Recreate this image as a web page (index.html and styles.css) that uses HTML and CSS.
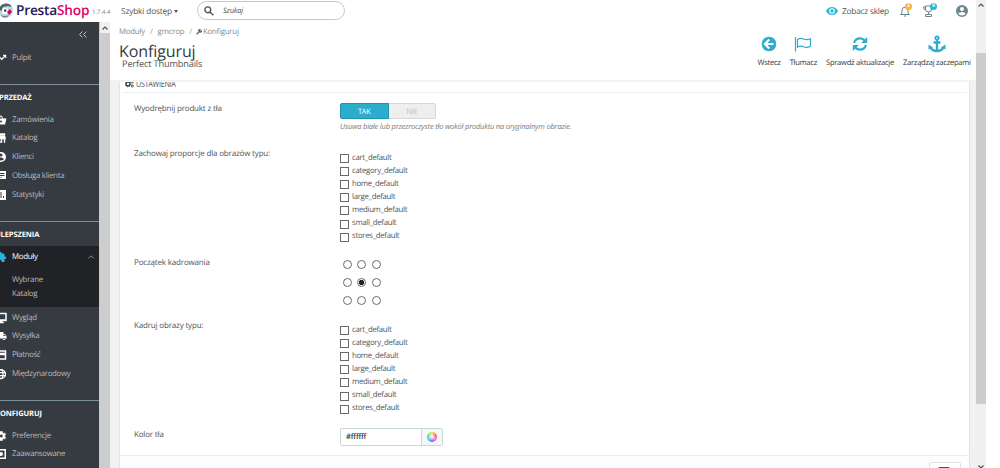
FILE: index.html
```html
<!doctype html>
<html lang="pl">
<head>
    <meta charset="UTF-8">
    <title>Konfiguruj - PrestaShop</title>
    <link rel="stylesheet" href="styles.css">
</head>
<body>
    <div class="app">
        <header class="topbar">
            <svg class="logo" width="13" height="17" viewBox="0 0 13 17">
                <circle cx="6" cy="8.500" r="7" fill="#b5dbe2"/>
                <path d="M-1 8a7 7 0 0 1 13-3l-4-1-5 1-1 4z" fill="#53636b"/>
                <circle cx="5" cy="9" r="3.200" fill="#fff"/>
                <circle cx="5.200" cy="8.600" r="1.300" fill="#3b4a52"/>
                <path d="M7 10l3-3 2 3-3 3z" fill="#df0067"/>
                <path d="M0 13q5 2 9 0l-2 2.500H3z" fill="#6e8790"/>
            </svg>
            <div class="brand">Presta<span>Shop</span></div>
            <div class="version">1.7.4.4</div>
            <div class="quick">Szybki dostęp <i class="caret"></i></div>
            <div class="search">
                <svg width="10" height="10" viewBox="0 0 10 10" fill="none" stroke="#4c5357" stroke-width="1.400"><circle cx="3.800" cy="3.800" r="2.900"/><path d="M6 6l3.300 3.300"/></svg>
                <span>Szukaj</span>
            </div>
            <div class="shop-link">
                <svg width="12" height="8" viewBox="0 0 12 8"><path d="M0 4q2-4 6-4t6 4q-2 4-6 4T0 4z" fill="#25b9d7"/><circle cx="6" cy="4" r="2.800" fill="#fff"/><circle cx="6" cy="4" r="1.700" fill="#25b9d7"/></svg>
                <span>Zobacz sklep</span>
            </div>
            <div class="notif bell">
                <svg width="10" height="12" viewBox="0 0 10 12" fill="none" stroke="#6c868e"><path d="M.5 9.500h9L8 8V5Q8 2.200 5 2.200T2 5v3z"/><path d="M4 11h2"/></svg>
                <b class="badge orange">2</b>
            </div>
            <div class="notif trophy">
                <svg width="11" height="12" viewBox="0 0 11 12" fill="none" stroke="#6c868e"><path d="M2.500 1h6v3q0 3-3 3t-3-3zM2.500 2H.5q0 3 2.500 3M8.500 2h2q0 3-2.500 3M5.500 7v2M2.500 11.500V9.500h6v2z"/></svg>
                <b class="badge blue">9</b>
            </div>
            <svg class="user" width="12" height="12" viewBox="0 0 24 24" fill="#6c868e"><path d="M12 0a12 12 0 1 0 0 24 12 12 0 0 0 0-24zm0 4a4 4 0 1 1 0 8 4 4 0 0 1 0-8zm0 17q-5 0-7.500-4 2-3 7.500-3t7.500 3Q17 21 12 21z"/></svg>
        </header>

        <div class="layout">
            <nav class="sidebar">
                <div class="collapse">
                    <svg width="8" height="7" viewBox="0 0 8 7" fill="none" stroke="#bcc3c8"><path d="M3.500.5l-3 3 3 3M7.500.5l-3 3 3 3"/></svg>
                </div>
                <a class="item dashboard"><svg class="ico" viewBox="0 0 24 24"><path d="M16 6l2.300 2.300-4.900 4.900-4-4L2 16.600 3.400 18l6-6 4 4 6.300-6.300L22 12V6z" stroke="#fff"/></svg>Pulpit</a>

                <section class="group">
                    <h2>SPRZEDAŻ</h2>
                    <a class="item"><svg class="ico" viewBox="0 0 24 24"><path d="M17 9l-5-7-5 7H1l3 12h16l3-12zM9 9l3-4 3 4zm3 8a2 2 0 1 1 0-4 2 2 0 0 1 0 4z"/></svg>Zamówienia</a>
                    <a class="item"><svg class="ico" viewBox="0 0 24 24"><path d="M20 3H4v3h16zm1 11v-2l-1-5H4l-1 5v2h1v7h10v-7h4v7h2v-7zm-9 5H6v-5h6z" stroke="#fff"/></svg>Katalog</a>
                    <a class="item"><svg class="ico" viewBox="0 0 24 24"><path d="M12 2a10 10 0 1 0 0 20 10 10 0 0 0 0-20zm0 3a3 3 0 1 1 0 6 3 3 0 0 1 0-6zm0 14q-4 0-6-3 2-3 6-3t6 3q-2 3-6 3z"/></svg>Klienci</a>
                    <a class="item"><svg class="ico" viewBox="0 0 24 24"><path d="M2 2h20v16H6l-4 4zM5 6v2h14V6zm0 4v2h14v-2zm0 4v1h9v-1z" fill-rule="evenodd"/></svg>Obsługa klienta</a>
                    <a class="item"><svg class="ico" viewBox="0 0 24 24"><path d="M2 2h20v20H2zm5 8v8h2v-8zm4-4v12h2V6zm5 8v4h2v-4z" fill-rule="evenodd"/></svg>Statystyki</a>
                </section>

                <section class="group improve">
                    <h2>ULEPSZENIA</h2>
                    <div class="opened">
                        <a class="item current"><svg class="ico" viewBox="0 0 24 24"><path d="M20 11h-1V7q0-2-2-2h-4V4a2.500 2.500 0 0 0-5 0v1H4Q2 5 2 7v4h2a2.500 2.500 0 0 1 0 5H2v6h6v-2a2.500 2.500 0 0 1 5 0v2h6v-6h1a2.500 2.500 0 0 0 0-5z"/></svg>Moduły
                            <svg class="chevron" width="6" height="4" viewBox="0 0 6 4" fill="none" stroke="#7e9299"><path d="M.3 3.500L3 .8l2.700 2.700"/></svg></a>
                        <a class="sub">Wybrane</a>
                        <a class="sub">Katalog</a>
                    </div>
                    <a class="item"><svg class="ico" viewBox="0 0 24 24"><path d="M1 2h22v16h-9v2h3v2H7v-2h3v-2H1zm2 2v11h18V4z" fill-rule="evenodd" stroke="#fff"/></svg>Wygląd</a>
                    <a class="item"><svg class="ico" viewBox="0 0 24 24"><path d="M20 8h-3V4H1v13h2a3 3 0 0 0 6 0h6a3 3 0 0 0 6 0h2v-5zM6 18.500a1.500 1.500 0 1 1 0-3 1.500 1.500 0 0 1 0 3zM17 9.500h2.500l2 2.500H17zm1 9a1.500 1.500 0 1 1 0-3 1.500 1.500 0 0 1 0 3z"/></svg>Wysyłka</a>
                    <a class="item"><svg class="ico" viewBox="0 0 24 24"><path d="M2 3h20v18H2zm2 2v3h16V5zm0 7v7h16v-7z" fill-rule="evenodd" stroke="#fff"/></svg>Płatność</a>
                    <a class="item"><svg class="ico line" viewBox="0 0 24 24"><circle cx="12" cy="12" r="9"/><ellipse cx="12" cy="12" rx="4" ry="9"/><path d="M3 9h18M3 15h18"/></svg>Międzynarodowy</a>
                </section>

                <section class="group configure">
                    <h2>KONFIGURUJ</h2>
                    <a class="item"><svg class="ico" viewBox="0 0 24 24"><path d="M19.400 13v-2l2.100-1.700-2-3.500-2.500 1-1.700-1L15 3h-5l-.4 2.800-1.700 1-2.500-1-2 3.500L5.500 11v2l-2.100 1.700 2 3.500 2.500-1 1.700 1L10 21h5l.4-2.800 1.700-1 2.500 1 2-3.500zM12.500 15.500a3.500 3.500 0 1 1 0-7 3.500 3.500 0 0 1 0 7z" stroke="#fff"/></svg>Preferencje</a>
                    <a class="item"><svg class="ico" viewBox="0 0 24 24"><path d="M2 2h20v20H2zm3 3v14h14V5z" fill-rule="evenodd"/><circle cx="12" cy="12" r="4"/></svg>Zaawansowane</a>
                </section>
            </nav>

            <div class="scrollbar side-scroll"><svg width="6" height="4" viewBox="0 0 6 4"><path d="M.5 3.500L3 1l2.500 2.500"/></svg><div class="thumb"></div></div>

            <main class="content">
                <div class="page-head">
                    <div class="titles">
                        <div class="breadcrumb">Moduły<i>/</i>gmcrop<i>/</i><svg width="6" height="6" viewBox="0 0 6 6"><path d="M.7 5.300L3.600 2.400" stroke="#5b6367" stroke-width="1.300"/><path d="M3 3a1.700 1.700 0 0 1 2-2.800L4 1.300l.7.700L5.800 1A1.700 1.700 0 0 1 3 3z" fill="#5b6367"/></svg>Konfiguruj</div>
                        <h1>Konfiguruj</h1>
                        <h4>Perfect Thumbnails</h4>
                    </div>
                    <div class="actions">
                        <a><svg width="16" height="16" viewBox="0 0 16 16"><circle cx="8" cy="8" r="7.300" fill="#2eacce"/><path d="M8.300 3.500L3.800 8l4.500 4.500M4 8h8.500" fill="none" stroke="#fff" stroke-width="2"/></svg>Wstecz</a>
                        <a><svg width="18" height="16" viewBox="0 0 18 16" fill="none" stroke="#2eacce" stroke-width="1.200"><path d="M1.500 1v14.500M3.500 3.500q3-2 6-.5t7-.3v7.500q-4 2-7 .5t-6 .5z"/></svg>Tłumacz</a>
                        <a><svg width="16" height="16" viewBox="0 0 16 16" fill="none" stroke="#2eacce" stroke-width="2.200"><path d="M2 6.800Q3.500 2.300 8 2.300q3 0 5 2.500M14 9.200Q12.500 13.700 8 13.700q-3 0-5-2.500"/><path d="M15.200 1v6H9.200zM.8 15V9h6z" fill="#2eacce" stroke="none"/></svg>Sprawdź aktualizacje</a>
                        <a><svg width="18" height="18" viewBox="0 0 18 18" fill="none" stroke="#2eacce" stroke-width="2.300"><circle cx="9" cy="3" r="1.700" stroke-width="1.800"/><path d="M9 5v11M5.500 7.500h7M2.500 12q1.500 4 6.500 4t6.500-4"/><path d="M.5 14.500v-5l4.500 3zM17.500 14.500v-5l-4.500 3z" fill="#2eacce" stroke="none"/></svg>Zarządzaj zaczepami</a>
                    </div>
                </div>

                <div class="panel">
                    <div class="panel-heading">
                        <svg width="9" height="8" viewBox="0 0 9 8" fill="none" stroke="#444b4f"><circle cx="3" cy="4" r="1.900" stroke-width="1.500"/><circle cx="3" cy="4" r="2.800" stroke-dasharray="1.100 1.100"/><circle cx="7.300" cy="2" r="1"/><circle cx="7.300" cy="6" r="1"/></svg>
                        <span>USTAWIENIA</span>
                    </div>
                    <div class="row row-switch">
                        <label>Wyodrębnij produkt z tła</label>
                        <div>
                            <div class="switch"><span class="on">TAK</span><span>NIE</span></div>
                            <p class="help">Usuwa białe lub przezroczyste tło wokół produktu na oryginalnym obrazie.</p>
                        </div>
                    </div>
                    <div class="row row-types">
                        <label>Zachowaj proporcje dla obrazów typu:</label>
                        <div class="checks">
                            <span><i></i>cart_default</span>
                            <span><i></i>category_default</span>
                            <span><i></i>home_default</span>
                            <span><i></i>large_default</span>
                            <span><i></i>medium_default</span>
                            <span><i></i>small_default</span>
                            <span><i></i>stores_default</span>
                        </div>
                    </div>
                    <div class="row row-origin">
                        <label>Początek kadrowania</label>
                        <div class="radios">
                            <i></i><i></i><i></i>
                            <i></i><i class="checked"></i><i></i>
                            <i></i><i></i><i></i>
                        </div>
                    </div>
                    <div class="row row-crop">
                        <label>Kadruj obrazy typu:</label>
                        <div class="checks">
                            <span><i></i>cart_default</span>
                            <span><i></i>category_default</span>
                            <span><i></i>home_default</span>
                            <span><i></i>large_default</span>
                            <span><i></i>medium_default</span>
                            <span><i></i>small_default</span>
                            <span><i></i>stores_default</span>
                        </div>
                    </div>
                    <div class="row row-color">
                        <label>Kolor tła</label>
                        <div class="color"><span>#ffffff</span><b><i></i></b></div>
                    </div>
                    <div class="panel-footer">
                        <div class="save"><i></i></div>
                    </div>
                </div>
            </main>
        </div>
    </div>
    <div class="scrollbar page-scroll"><svg width="6" height="4" viewBox="0 0 6 4"><path d="M.5 3.500L3 1l2.500 2.500"/></svg><div class="thumb"></div><svg class="down" width="6" height="4" viewBox="0 0 6 4"><path d="M.5.5L3 3 5.500.5"/></svg></div>
</body>
</html>
```
FILE: styles.css
```css
* {
    box-sizing: border-box;
}

body {
    margin: 0;
    height: 468px;
    display: flex;
    overflow: hidden;
    background: #fff;
    font-family: "Open Sans", sans-serif;
    font-size: 8px;
    letter-spacing: -.22px;
    text-rendering: geometricPrecision;
    color: #4f575b;
}

h1, h2, h4, p {
    margin: 0;
}

i {
    font-style: normal;
}

svg {
    flex: none;
    display: block;
}

.app {
    width: 976px;
    height: 468px;
    overflow: hidden;
}

/* top bar */
.topbar {
    height: 22px;
    display: flex;
    align-items: center;
    padding-bottom: 1px;
    white-space: nowrap;
    font-size: 8.3px;
}

.brand {
    width: 73px;
    margin-left: 3px;
    font-size: 13.7px;
    font-weight: 600;
    letter-spacing: -.2px;
    line-height: 20px;
    color: #251b5b;
}

.brand span {
    color: #df0067;
}

.version {
    width: 32px;
    margin-left: 3px;
    padding-top: 3px;
    font-size: 6px;
    letter-spacing: 0;
    color: #6c868e;
}

.quick {
    margin-left: -3px;
    width: 76px;
    padding-top: 1px;
    letter-spacing: -.15px;
}

.caret {
    display: inline-block;
    vertical-align: 1px;
    border: 2.5px solid transparent;
    border-top: 3px solid #4c5357;
    border-bottom: 0;
}

.search {
    width: 148px;
    height: 19px;
    display: flex;
    align-items: center;
    gap: 9px;
    padding-left: 6px;
    border: 1px solid #bbcdd2;
    border-radius: 10px;
    font-size: 7.5px;
    font-style: italic;
}

.search span,
.shop-link span {
    padding-top: 1px;
}

.shop-link {
    display: flex;
    align-items: center;
    gap: 4px;
    margin-left: 481px;
    width: 75px;
}

.notif {
    position: relative;
    width: 23px;
    left: -1px;
}

.badge {
    position: absolute;
    top: -2px;
    left: 5px;
    width: 7px;
    height: 7px;
    border-radius: 50%;
    font-size: 5px;
    letter-spacing: 0;
    line-height: 7px;
    text-align: center;
    color: #fff;
}

.trophy .badge {
    left: 7px;
}

.orange {
    background: #fab13c;
}

.blue {
    background: #25b9d7;
}

.user {
    margin-left: 9px;
}

/* sidebar */
.layout {
    display: flex;
    height: 446px;
}

.sidebar {
    width: 100px;
    flex: none;
    overflow: hidden;
    background: #363a41;
    border-right: 1px solid #cfc9c3;
    font-size: 7.9px;
    letter-spacing: -.31px;
    color: #b4b9bd;
}

.collapse {
    display: flex;
    justify-content: flex-end;
    padding: 9px 12px 0 0;
    height: 26px;
}

.item {
    display: flex;
    align-items: center;
    height: 18.8px;
    padding-top: 1.5px;
    white-space: nowrap;
}

.ico {
    width: 12px;
    height: 12px;
    margin-left: -5px;
    margin-right: 5px;
    fill: #fff;
}

.ico.line {
    fill: none;
    stroke: #fff;
    stroke-width: 2.5;
}

.group {
    height: 137px;
    border-top: 1px solid #7a8f99;
}

.dashboard {
    margin-bottom: 17.2px;
}

.group h2 {
    margin-left: -5px;
    padding-top: 8.5px;
    height: 24.5px;
    font-size: 7.5px;
    line-height: 11px;
    letter-spacing: -.1px;
    color: #fff;
}

.group.improve {
    height: 179px;
}

.opened {
    height: 61px;
    background: #202226;
}

.current {
    color: #fff;
    height: 20px;
    margin-bottom: 6.5px;
}

.current .ico {
    fill: #25b9d7;
}

.chevron {
    margin-left: auto;
    margin-right: 5px;
}

.sub {
    display: block;
    padding-left: 12px;
    line-height: 14px;
}

/* scrollbars */
.scrollbar {
    width: 10px;
    flex: none;
    display: flex;
    flex-direction: column;
    align-items: center;
    background: #f0f0f0;
}

.scrollbar svg {
    margin: 4px 0 3px;
    fill: none;
    stroke: #505050;
    stroke-width: 1.2;
}

.thumb {
    width: 10px;
    background: #cdcdcd;
}

.side-scroll .thumb {
    flex: 1;
}

.page-scroll svg:first-child {
    margin-top: 3px;
    margin-bottom: 46px;
}

.page-scroll .thumb {
    height: 351px;
}

.page-scroll .down {
    margin: auto 0 -1px;
}

/* page header */
.content {
    flex: 1;
    background: #eff1f2;
}

.page-head {
    position: relative;
    z-index: 1;
    height: 59px;
    display: flex;
    justify-content: space-between;
    padding: 0 5.3px 0 9px;
    background: #fff;
    border-bottom: 1px solid #eef0f1;
    box-shadow: 0 1px 0 #f5f6f7;
}

.breadcrumb {
    display: flex;
    align-items: center;
    height: 18px;
    padding-top: 1px;
    font-size: 7.8px;
    letter-spacing: -.2px;
    color: #858c90;
}

.breadcrumb i {
    margin: 0 5px;
    color: #72c279;
}

.breadcrumb svg {
    margin: 1px 1px 0 -1px;
}

h1 {
    font-size: 16px;
    font-weight: 400;
    line-height: 23px;
    letter-spacing: -.1px;
    color: #363a41;
}

h4 {
    margin: -5px 0 0 3px;
    font-size: 9.2px;
    font-weight: 400;
    line-height: 11px;
    letter-spacing: -.15px;
    color: #4c5357;
}

.actions {
    display: flex;
    gap: 9px;
    padding-top: 13px;
    white-space: nowrap;
    font-size: 7.6px;
    letter-spacing: -.27px;
    color: #363a41;
}

.actions a {
    display: flex;
    flex-direction: column;
    align-items: center;
}

.actions svg {
    height: 18px;
    margin-bottom: 5px;
}

/* settings form */
.panel {
    width: 851px;
    height: 400px;
    margin: -4px 0 0 9px;
    background: #fff;
    border: 1px solid #dfe5e8;
}

.panel-heading {
    display: flex;
    align-items: center;
    gap: 2px;
    height: 15px;
    margin: 0 2px;
    padding: 0 0 3px 3px;
    border-bottom: 1px solid #f0f1f2;
}

.panel-heading span {
    font-size: 9px;
    letter-spacing: -.35px;
    line-height: 11px;
    transform: scaleX(.8);
    transform-origin: left;
}

.row {
    display: flex;
    letter-spacing: -.17px;
}

.row label {
    width: 206px;
    margin: -5.5px 0 0 14px;
    line-height: 11px;
}

.row-switch {
    height: 60px;
    padding-top: 10px;
}

.row-switch label {
    margin-top: -.5px;
}

.switch {
    display: flex;
    width: 96px;
    height: 16px;
    border: 1px solid #d5d9db;
    border-radius: 2px;
    background: #eee;
    font-size: 7.3px;
    line-height: 16px;
    text-align: center;
    color: #b9bec1;
}

.switch span {
    flex: 1;
}

.switch .on {
    margin: -1px 0 -1px -1px;
    border: 1px solid #1e94b1;
    border-radius: 2px 0 0 2px;
    background: #2eacce;
    color: #fff;
}

.help {
    margin-top: 3px;
    font-size: 7.5px;
    font-style: italic;
    letter-spacing: -.2px;
    line-height: 11px;
    color: #7c8184;
}

.row-types {
    height: 109px;
}

.checks {
    margin-top: -2px;
}

.checks span {
    display: flex;
    align-items: center;
    gap: 3px;
    height: 13.1px;
    padding-top: 1px;
    font-size: 7.8px;
    line-height: 11px;
    letter-spacing: -.3px;
}

.checks i {
    width: 9px;
    height: 9px;
    margin-top: 1px;
    border: 1px solid #6b6b6b;
}

.row-origin {
    height: 63px;
}

.radios {
    display: grid;
    grid-template-columns: repeat(3, 9px);
    grid-auto-rows: 9px;
    gap: 9px 5.3px;
    margin: -2px 0 0 3px;
}

.radios i {
    border: 1px solid #6b6b6b;
    border-radius: 50%;
}

.radios .checked {
    background: radial-gradient(circle, #222 2.3px, #fff 3px);
}

.row-crop {
    height: 103px;
}

.row-color label {
    margin-top: 1px;
}

.color {
    display: flex;
    width: 103px;
    height: 18px;
    border: 1px solid #c7d6db;
    border-radius: 2px;
    font-size: 7.6px;
    font-weight: 600;
    line-height: 17px;
    color: #363a41;
}

.color span {
    width: 80px;
    padding-left: 5px;
}

.color b {
    flex: 1;
    display: flex;
    align-items: center;
    justify-content: center;
    border-left: 1px solid #c7d6db;
    background: #f5f8f9;
}

.color b i {
    width: 10px;
    height: 10px;
    border-radius: 50%;
    background: radial-gradient(circle, #fff, transparent 65%), conic-gradient(#fd5, #f54, #f5d, #65f, #3cf, #4e7, #fd5);
}

.panel-footer {
    display: flex;
    justify-content: flex-end;
    height: 40px;
    margin-top: 9px;
    padding: 6px 8px;
    border-top: 1px solid #e8edef;
    background: #fcfdfe;
}

.save {
    width: 32px;
    height: 24px;
    padding: 4px 8px;
    border: 1px solid #dde1e3;
    border-radius: 2px;
    background: #fff;
}

.save i {
    display: block;
    width: 12px;
    height: 12px;
    border-radius: 2px;
    background: #4c5357;
}
```
